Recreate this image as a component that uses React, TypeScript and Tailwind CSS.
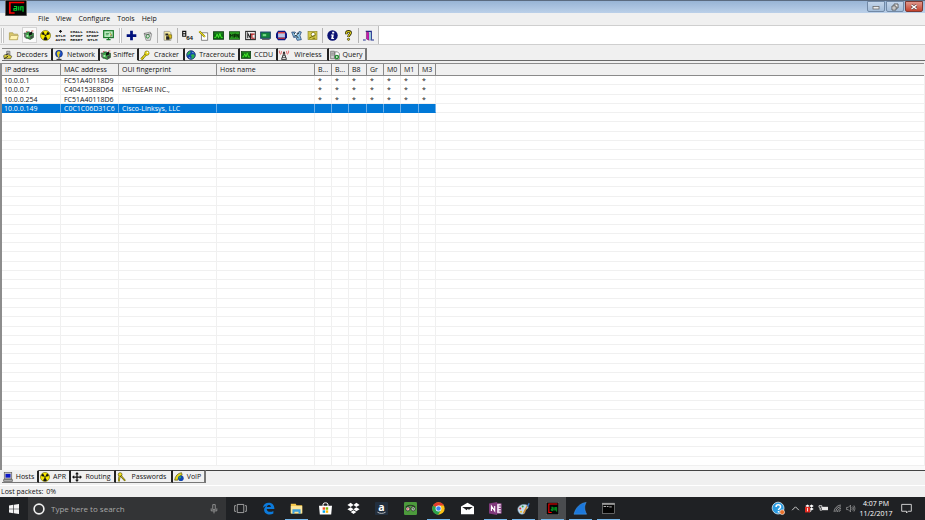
import React from "react";

type Children = { children?: React.ReactNode };

function Icon({
  children,
  className = "size-3",
  stretch = false,
}: Children & { className?: string; stretch?: boolean }) {
  return (
    <svg
      viewBox="0 0 16 16"
      preserveAspectRatio={stretch ? "none" : undefined}
      className={`shrink-0 overflow-visible ${className}`}
      aria-hidden="true"
    >
      {children}
    </svg>
  );
}

/* ---------- shared drawings ---------- */

const CainLogo = () => (
  <>
    <rect width="16" height="16" fill="#7c7c7c" />
    <rect x="0.6" y="0.6" width="14.8" height="14.8" fill="#050505" />
    <path d="M14 2.500H3.500V13H7" fill="none" stroke="#f00" strokeWidth="1.300" />
    <path
      d="M6.500 6.500h2v3.800h-2V8.500h2M10 6.300v4.200M11.500 10.500V6.800h1.600v5"
      fill="none"
      stroke="#00d42c"
      strokeWidth="0.900"
    />
  </>
);

const Radiation = () => (
  <>
    <circle cx="8" cy="8" r="7.3" fill="#f5e800" stroke="#4a4800" strokeWidth="0.8" />
    <path d="M8 8 1.8 6.2A6.4 6.4 0 0 1 4.8 2.4zM8 8l3.2-5.6a6.4 6.4 0 0 1 3 3.8zM8 8l3.3 5.7a6.6 6.6 0 0 1-6.6 0z" fill="#111" />
    <circle cx="8" cy="8" r="1.6" fill="#111" stroke="#f5e800" strokeWidth="0.7" />
  </>
);

const Card = () => (
  <>
    <path d="M0 5h4l1-2h4l2 2h4v7l-5 3-5-2H3z" fill="#3fa148" stroke="#0c2b10" strokeWidth="1" />
    <path d="M0 5v6l3 2V7z" fill="#777" />
    <path d="m8 5 5-3v5L8 9z" fill="#111" />
    <path d="M4 8h3v3H4z" fill="#a8f0b0" />
    <path d="M10 10.500 14 8.500v3.500L10 14z" fill="#444" />
    <path d="M12 1.500h3M3 3l2-1" stroke="#d33" strokeWidth="1.300" />
  </>
);

const Key = () => (
  <>
    <path d="M2 15 9.500 7" stroke="#6b6400" strokeWidth="3.600" />
    <path d="M2 15 9.500 7" stroke="#f2e21d" strokeWidth="2" />
    <path d="m4 12.500 2.500 2" stroke="#8a8200" strokeWidth="1.500" />
    <circle cx="11" cy="5" r="3.500" fill="#f2e21d" stroke="#6b6400" />
    <circle cx="12" cy="4" r="1.200" fill="#fff" />
  </>
);

const Pulse = () => (
  <>
    <rect x="0.500" y="2.500" width="15" height="11" fill="#0b6b12" stroke="#062f08" />
    <path d="M2 11h2l2-5 2 5 2-6 2 6h2" fill="none" stroke="#4dff2f" strokeWidth="1.300" />
    <path d="M2 4.500h12" stroke="#33a02f" />
  </>
);

const Globe = () => (
  <>
    <circle cx="8" cy="8" r="7" fill="#1246b0" stroke="#081b52" />
    <path d="M4 3c3-2 4 0 3 2s-3 1-4 4C1 8 2 5 4 3zM9 7c3-1 5 0 5 2s-3 5-5 5 1-3 0-4-2-2 0-3z" fill="#2fb14a" />
    <path d="m10 3 2 2M5 12l2 1" stroke="#fff" />
  </>
);

const DropboxMark = ({ fill = "#fff" }: { fill?: string }) => (
  <path
    d="M4.500 1 0.500 3.600 4.500 6.200 8 3.600zM11.500 1 15.500 3.600 11.500 6.200 8 3.600zM4.500 6.400.500 9 4.500 11.500 8 9zM11.500 6.400 15.500 9 11.500 11.500 8 9zM4.500 12.300 8 10l3.500 2.300L8 14.800z"
    fill={fill}
  />
);

function TinyText({ lines }: { lines: string[] }) {
  return (
    <>
      {lines.map((line, i) => (
        <text
          key={line}
          x="8"
          y={lines.length === 2 ? 10 + i * 6 : 4 + i * 6}
          textAnchor="middle"
          fontSize="6"
          fontWeight="700"
          fontFamily="Liberation Mono, monospace"
          fill="#111"
        >
          {line}
        </text>
      ))}
    </>
  );
}

/* ---------- toolbar ---------- */

type Tool = { label: string; icon: React.ReactNode; pressed?: boolean };

const toolGroups: { width: string; lead: string; tools: Tool[] }[] = [
  {
    width: "w-[112px] pr-[2px]",
    lead: "grip",
    tools: [
      {
        label: "Open",
        icon: (
          <>
            <path d="M2 4h5l1 2h6v8H2z" fill="#d8c66a" stroke="#a8974a" />
            <path d="M4 8h11l-2 6H2z" fill="#fff3b0" stroke="#b5a55a" />
          </>
        ),
      },
      { label: "Start sniffer", icon: <Card />, pressed: true },
      { label: "Start APR", icon: <Radiation /> },
      {
        label: "NTLM auth",
        icon: (
          <>
            <path d="M8 0v4M6 2h4" stroke="#111" strokeWidth="1.500" />
            <TinyText lines={["NTLM", "AUTH"]} />
          </>
        ),
      },
      { label: "Challenge spoof reset", icon: <TinyText lines={["CHALL", "SPOOF", "RESET"]} /> },
      { label: "Challenge spoof NTLM", icon: <TinyText lines={["CHALL", "SPOOF", "NTLM"]} /> },
      {
        label: "Downgrade",
        icon: (
          <>
            <rect x="1" y="1" width="14" height="10" fill="#bff0c4" stroke="#1a7a2a" strokeWidth="1.800" />
            <path d="M4 5h5M4 7h4" stroke="#1a7a2a" />
            <path d="m10 3 3 5h-2l1 4" fill="#f2e21d" stroke="#555" strokeWidth="0.800" />
            <path d="M8 11v4M5 14h6" stroke="#1a7a2a" strokeWidth="1.800" />
          </>
        ),
      },
    ],
  },
  {
    width: "w-[31px]",
    lead: "grip",
    tools: [
      { label: "Add to list", icon: <path d="M8 1v14M1 8h14" stroke="#00107c" strokeWidth="4" /> },
      {
        label: "Remove",
        icon: (
          <>
            <path d="m3 5 9-2 2 3-2 9H6z" fill="#dcdcdc" stroke="#777" />
            <path d="m6 8 3-2 2 3-2 3-3-1z" fill="none" stroke="#2d8c3a" strokeWidth="1.400" />
            <path d="M3 5c2 2 7 2 10 0" fill="none" stroke="#555" />
          </>
        ),
      },
    ],
  },
  {
    width: "w-[15px]",
    lead: "line",
    tools: [
      {
        label: "Configure",
        icon: (
          <>
            <path d="M3 2h8l2 2v11H3z" fill="#f4e9a0" stroke="#888" />
            <path d="M5 5h4v3H5zM6 9h5v5H6z" fill="#222" />
            <path d="M9 7h5v5h-3z" fill="#e0c21c" stroke="#554c00" strokeWidth="0.800" />
          </>
        ),
      },
    ],
  },
  {
    width: "w-[140px]",
    lead: "line",
    tools: [
      {
        label: "Base64 decoder",
        icon: (
          <>
            <path d="M1 2h4.500v7H1zM1 5.500h4.500" fill="none" stroke="#111" strokeWidth="1.600" />
            <text x="6" y="15" fontSize="9" fontWeight="700" fontFamily="Liberation Sans, sans-serif" fill="#111">
              64
            </text>
          </>
        ),
      },
      {
        label: "Access password",
        icon: (
          <>
            <path d="M5 4h9v11H5z" fill="#fff" stroke="#555" />
            <path d="m2 2 8 8" stroke="#6b6400" strokeWidth="3" />
            <path d="m2 2 8 8" stroke="#f2e21d" strokeWidth="1.500" />
          </>
        ),
      },
      { label: "Cisco type-7 decoder", icon: <Pulse /> },
      {
        label: "Cisco VPN decoder",
        icon: (
          <>
            <rect x="0.500" y="2.500" width="15" height="11" fill="#2a9c22" stroke="#073b08" />
            <path d="M2 11V6l2 3 2-3v5M8 11V6h2v3H8M11.500 11V6l2.500 5V6" fill="none" stroke="#041f04" strokeWidth="1.200" />
          </>
        ),
      },
      {
        label: "VNC decoder",
        icon: (
          <>
            <rect x="1" y="2" width="14" height="12" fill="#eee" stroke="#222" strokeWidth="1.500" />
            <path d="M8 6h4M14 6h-4v6h4" fill="none" stroke="#b51d1d" strokeWidth="1.700" />
            <path d="M4 12V5l4 7V5" fill="none" stroke="#222" strokeWidth="1.500" />
          </>
        ),
      },
      {
        label: "Remote desktop decoder",
        icon: (
          <>
            <rect x="1" y="3" width="14" height="9" fill="#13843b" stroke="#17406b" strokeWidth="1.500" />
            <path d="M4 6h5v3H4z" fill="#77dd88" />
            <path d="M3 13.500h11" stroke="#444" strokeWidth="1.500" />
          </>
        ),
      },
      {
        label: "Syskey decoder",
        icon: (
          <>
            <path d="M3 1h10l3 4v6l-3 4H3l-3-4V5z" fill="#0b1680" />
            <path d="M3 3h10v3H3z" fill="#e24040" />
            <rect x="3" y="5" width="10" height="6" fill="#b6c4e6" />
            <path d="M3 12h10" stroke="#d33" strokeWidth="1.500" />
          </>
        ),
      },
      {
        label: "Hash calculator",
        icon: (
          <>
            <path d="M1 3h5l2 3 4-4 3 1-2 5 2 6-6 1-2-5-3 1z" fill="#8ec6e8" stroke="#113066" />
            <path d="m4 4 7 8M12 4 5 9" stroke="#111" strokeWidth="1.300" />
            <circle cx="7" cy="6" r="1.500" fill="#fff" />
          </>
        ),
      },
      {
        label: "RSA token",
        icon: (
          <>
            <rect x="1.500" y="2" width="13" height="12" fill="#d5c94a" stroke="#8f8729" />
            <circle cx="9" cy="6.500" r="3" fill="#fff" stroke="#6b6400" />
            <path d="m3 12 9-5M8 12h4" stroke="#6b6400" strokeWidth="1.300" />
          </>
        ),
      },
    ],
  },
  {
    width: "w-[31px]",
    lead: "line",
    tools: [
      {
        label: "About",
        icon: (
          <>
            <circle cx="8" cy="8" r="7.600" fill="#0b1272" />
            <path d="M7.500 2.500h3v2.600h-3zM6 6.500h4l-1 5h1.500L10 13H6l1-5H5.500z" fill="#fff" />
          </>
        ),
      },
      {
        label: "Help",
        icon: (
          <>
            <path d="M5 6V4c0-3 6-3 6 0S8 7 8 10" fill="none" stroke="#2b2900" strokeWidth="3.800" />
            <path d="M5 5.600V4c0-2.500 6-2.500 6 0S8 7 8 9.700" fill="none" stroke="#e8d81a" strokeWidth="1.600" />
            <circle cx="8" cy="13.500" r="1.600" fill="#e8d81a" stroke="#2b2900" />
          </>
        ),
      },
    ],
  },
  {
    width: "w-[16px]",
    lead: "line",
    tools: [
      {
        label: "Exit",
        icon: (
          <>
            <path d="M4 2h8v12" fill="none" stroke="#1d2d8c" strokeWidth="1.800" />
            <path d="m5 2 4 2v11l-4-2z" fill="#c41bb0" stroke="#5a0e50" strokeWidth="0.700" />
            <path d="M9 4h2v10H9z" fill="#8ee0e0" />
            <path d="M0 14.500h4M11 14.500h5" stroke="#1d2d8c" strokeWidth="1.500" />
          </>
        ),
      },
    ],
  },
];

function Toolbar() {
  return (
    <div className="flex h-[20px] shrink-0 border-y border-[#cfcfcf] bg-[#f0f0f0]">
      <div role="toolbar" className="flex items-center">
        {toolGroups.map((group, i) => (
          <React.Fragment key={i}>
            {group.lead === "grip" ? (
              <span className="mr-[2px] ml-px h-[15px] w-[3px] border-x border-[#c4c4c4] bg-white" />
            ) : (
              <span className="mx-[2px] h-[15px] w-px bg-[#b4b4b4]" />
            )}
            <div className={`flex justify-between ${group.width}`}>
              {group.tools.map((tool) => (
                <button
                  key={tool.label}
                  type="button"
                  aria-label={tool.label}
                  aria-pressed={tool.pressed}
                  className={`flex h-[16px] w-[15px] items-center justify-center ${
                    tool.pressed ? "border border-[#d4d4d4] bg-[#fafafa]" : ""
                  }`}
                >
                  <Icon className={tool.pressed ? "size-[10px]" : "size-[11px]"}>{tool.icon}</Icon>
                </button>
              ))}
            </div>
          </React.Fragment>
        ))}
      </div>
      <div className="ml-px flex-1 border-l border-[#bdbdbd] bg-white" />
    </div>
  );
}

/* ---------- tabs ---------- */

type Tab = { label: string; width: string; icon: React.ReactNode };

const topTabs: Tab[] = [
  {
    label: "Decoders",
    width: "w-[51px]",
    icon: (
      <>
        <path d="M6 2h5v7H6z" fill="#cfcfcf" stroke="#444" />
        <path d="M1 9c3-3 8-2 13 1l-2 4H2z" fill="#d8cd3a" stroke="#333" />
        <path d="m2 14 6-4M9 5l-4 3" stroke="#222" strokeWidth="1.500" />
      </>
    ),
  },
  {
    label: "Network",
    width: "w-[47px]",
    icon: (
      <>
        <circle cx="8" cy="6" r="5.500" fill="#1e50c8" stroke="#0a1f60" />
        <path d="M7 2c3 0 4 2 2 4s1 3-1 5-2-3-3-4 0-5 2-5z" fill="#e3cf1e" />
        <path d="M8 12v2M4 15h8" stroke="#222" strokeWidth="1.500" />
      </>
    ),
  },
  { label: "Sniffer", width: "w-[39px]", icon: <Card /> },
  { label: "Cracker", width: "w-[46px]", icon: <Key /> },
  { label: "Traceroute", width: "w-[55px]", icon: <Globe /> },
  { label: "CCDU", width: "w-[38px]", icon: <Pulse /> },
  {
    label: "Wireless",
    width: "w-[51px]",
    icon: (
      <>
        <path d="M1 1c-1 2 0 5 2 6M4 2c-1 2 0 3 1 4M15 1c1 2 0 5-2 6M12 2c1 2 0 3-1 4" fill="none" stroke="#e03a3a" strokeWidth="1.300" />
        <path d="M8 4 4 15h8z" fill="none" stroke="#222" strokeWidth="1.400" />
        <path d="M6 9h4M5 12h6" stroke="#222" />
        <circle cx="8" cy="4" r="1.500" fill="#222" />
      </>
    ),
  },
  {
    label: "Query",
    width: "w-[38px]",
    icon: (
      <>
        <path d="M1 2h6v12H1z" fill="#d0d0d0" stroke="#555" />
        <path d="M2 5h4M2 8h4" stroke="#555" />
        <path d="M8 3h4l3 3v9H8z" fill="#fff" stroke="#555" />
        <circle cx="11" cy="11" r="3.600" fill="#1b8a2a" />
        <path d="m10 9 3 2-3 2z" fill="#fff" />
      </>
    ),
  },
];

const bottomTabs: Tab[] = [
  {
    label: "Hosts",
    width: "w-[37px]",
    icon: (
      <>
        <rect x="2" y="1" width="12" height="10" fill="#c8c8c8" stroke="#555" />
        <rect x="4" y="3" width="8" height="6" fill="#0b16c8" />
        <path d="M1 12h14v3H1z" fill="#b5b5b5" stroke="#444" />
      </>
    ),
  },
  { label: "APR", width: "w-[32px]", icon: <Radiation /> },
  {
    label: "Routing",
    width: "w-[45px]",
    icon: (
      <path
        d="M8 0l3 3.500H9V7h3.500V5L16 8l-3.500 3V9H9v3.500h2L8 16l-3-3.500h2V9H3.500v2L0 8l3.500-3v2H7V3.500H5z"
        fill="#111"
      />
    ),
  },
  {
    label: "Passwords",
    width: "w-[57px]",
    icon: (
      <>
        <circle cx="5" cy="4" r="3" fill="#f2e21d" stroke="#4b4600" />
        <path d="m6 6 7 8M4 7l-1 8" stroke="#4b4600" strokeWidth="3" />
        <path d="m6 6 7 8M4 7l-1 8" stroke="#f2e21d" strokeWidth="1.300" />
      </>
    ),
  },
  {
    label: "VoIP",
    width: "w-[33px]",
    icon: (
      <>
        <path d="M1 13C2 6 6 2 12 1l1 4c-4 1-6 4-7 8z" fill="#e3d61e" stroke="#4b4600" />
        <circle cx="11" cy="10" r="4.500" fill="#1246b0" />
        <path d="M9 7c2-1 3 1 2 2s-2 2-3 1 0-2 1-3z" fill="#2fb14a" />
      </>
    ),
  },
];

function Tabs({ tabs, active, side }: { tabs: Tab[]; active: string; side: "top" | "bottom" }) {
  const top = side === "top";
  return (
    <div
      role="tablist"
      className={`flex shrink-0 pl-[2px] ${top ? "mt-[3px] h-[13px]" : "h-[13px] bg-[#f0f0f0]"}`}
    >
      {tabs.map((tab) => {
        const selected = tab.label === active;
        let edge = top ? "border-t-[#8a8a8a] border-b-[#6a6a6a]" : "border-t-[#444] border-b-[#777]";
        if (selected) {
          edge = top ? "border-t-[#8a8a8a] border-b-[#f0f0f0]" : "border-t-[#f0f0f0] border-b-[#777]";
        }
        return (
          <button
            key={tab.label}
            type="button"
            role="tab"
            aria-selected={selected}
            className={`flex items-center border-y border-r-2 border-r-[#222] pl-px last-of-type:border-r-[#777] ${edge} ${tab.width}`}
          >
            <Icon className="size-[10px]">{tab.icon}</Icon>
            <span className="flex-1 text-center">{tab.label}</span>
          </button>
        );
      })}
      <div className={`flex-1 ${top ? "border-b border-[#6a6a6a]" : "border-t border-[#444]"}`} />
    </div>
  );
}

/* ---------- host list ---------- */

const columns = [
  { label: "IP address", width: "w-[59px]" },
  { label: "MAC address", width: "w-[58px]" },
  { label: "OUI fingerprint", width: "w-[98px]" },
  { label: "Host name", width: "w-[98px]" },
  { label: "B...", width: "w-[17px]" },
  { label: "B...", width: "w-[17px]" },
  { label: "B8", width: "w-[18px]" },
  { label: "Gr", width: "w-[17px]" },
  { label: "M0", width: "w-[17px]" },
  { label: "M1", width: "w-[18px]" },
  { label: "M3", width: "w-[17px]" },
];

const hosts = [
  { ip: "10.0.0.1", mac: "FC51A40118D9", oui: "", mark: "*" },
  { ip: "10.0.0.7", mac: "C404153E8D64", oui: "NETGEAR INC.,", mark: "*" },
  { ip: "10.0.0.254", mac: "FC51A40118D6", oui: "", mark: "*" },
  { ip: "10.0.0.149", mac: "C0C1C06D31C6", oui: "Cisco-Linksys, LLC", mark: "" },
];

const ROWS = 42;
const SELECTED = 3;

function HostTable() {
  return (
    <div className="min-h-0 flex-1 border-t border-l-2 border-[#8c8c8c] bg-white">
      <table className="h-full w-full table-fixed border-separate border-spacing-0 text-left">
        <thead>
          <tr className="h-[12px] bg-[#f0f0f0]">
            {columns.map((col, i) => (
              <th
                key={i}
                className={`h-[12px] overflow-hidden border-r border-b border-[#8a8a8a] p-0 pt-px pl-[3px] font-normal whitespace-nowrap ${col.width}`}
              >
                {col.label}
              </th>
            ))}
            <td className="border-b border-[#8a8a8a] p-0" />
          </tr>
        </thead>
        <tbody>
          {Array.from({ length: ROWS }, (_, r) => {
            const host = hosts[r];
            const cells = host
              ? [host.ip, host.mac, host.oui, "", ...Array(7).fill(host.mark)]
              : Array(11).fill("");
            return (
              <tr key={r} aria-selected={r === SELECTED}>
                {cells.map((cell, c) => (
                  <td
                    key={c}
                    className={`border-r border-b p-0 pt-px leading-[7px] whitespace-nowrap ${
                      c === 0 ? "pl-[2px]" : "pl-[3px]"
                    } ${
                      r === SELECTED
                        ? "border-r-[#6db0ea] border-b-[#0078d7] bg-[#0078d7] text-white"
                        : "border-[#f0f0f0]"
                    }`}
                  >
                    {cell || "\u00a0"}
                  </td>
                ))}
                <td className="border-b border-[#f0f0f0] p-0" />
              </tr>
            );
          })}
        </tbody>
      </table>
    </div>
  );
}

/* ---------- taskbar ---------- */

const apps: { label: string; icon: React.ReactNode; open?: boolean; active?: boolean }[] = [
  {
    label: "Task view",
    icon: (
      <path d="M4 3h8v10H4zM2.500 4.500H.8v7h1.700M13.500 4.500h1.700v7h-1.700" fill="none" stroke="#b8b8b8" strokeWidth="1" />
    ),
  },
  {
    label: "Edge",
    icon: (
      <path
        d="M1 7.500C1.600 3 4.500.800 8.300.800c4.600 0 7 3.200 7 7.700H5.800c.200 4 5.200 4.500 8.200 2.500v3.300C9 16.800 2.600 15 2.600 9.500c0-2.300 1.300-4 3.200-5C3.600 5 2 6 1 7.500zm4.900-1.400h5C10.900 3 6.500 2.900 5.900 6.100z"
        fill="#0c7bdc"
      />
    ),
  },
  {
    label: "File Explorer",
    open: true,
    icon: (
      <>
        <path d="M1 2h6l1 2h7v10H1z" fill="#f5c84b" />
        <path d="M1 5h14v9H1z" fill="#fde69a" />
        <path d="M3 9h10v5.500h-2.500V12h-5v2.500H3z" fill="#3ea0dc" />
      </>
    ),
  },
  {
    label: "Store",
    icon: (
      <>
        <path d="M5 5V2.500C5 .5 11 .5 11 2.500V5" fill="none" stroke="#fff" strokeWidth="1.200" />
        <path d="M0 4.500h16L15 15.500H1z" fill="#fff" />
        <path d="M4.500 6.500h3v3h-3z" fill="#f25022" />
        <path d="M8.300 6.500h3v3h-3z" fill="#7fba00" />
        <path d="M4.500 10.300h3v3h-3z" fill="#00a4ef" />
        <path d="M8.300 10.300h3v3h-3z" fill="#ffb900" />
      </>
    ),
  },
  { label: "Dropbox", icon: <DropboxMark /> },
  {
    label: "Amazon",
    icon: (
      <>
        <rect width="16" height="16" rx="1" fill="#222f3e" />
        <text x="8" y="11" textAnchor="middle" fontSize="13" fontWeight="700" fontFamily="Open Sans, sans-serif" fill="#fff">
          a
        </text>
        <path d="M3 12.500c3 2 7 2 10 0" fill="none" stroke="#d8d8d8" strokeWidth="1" />
      </>
    ),
  },
  {
    label: "TripAdvisor",
    icon: (
      <>
        <rect width="16" height="16" rx="1.500" fill="#4c9a3c" />
        <path d="M2 6c4-2.500 8-2.500 12 0" fill="none" stroke="#222" strokeWidth="1.200" />
        <circle cx="4.800" cy="8.500" r="2.500" fill="#fff" stroke="#222" />
        <circle cx="11.200" cy="8.500" r="2.500" fill="#fff" stroke="#222" />
        <circle cx="4.800" cy="8.500" r="1" fill="#d33" />
        <circle cx="11.200" cy="8.500" r="1" fill="#184d10" />
      </>
    ),
  },
  {
    label: "Chrome",
    open: true,
    icon: (
      <>
        <circle cx="8" cy="8" r="7.600" fill="#fbc116" />
        <path d="M8 8 1.400 4.200A7.600 7.600 0 0 1 14.600 4.200H8z" fill="#e33b2e" />
        <path d="M8 8 1.400 4.200A7.600 7.600 0 0 0 7.500 15.600L11 10z" fill="#2ba24c" />
        <circle cx="8" cy="8" r="3.600" fill="#fff" />
        <circle cx="8" cy="8" r="2.800" fill="#4285f4" />
      </>
    ),
  },
  {
    label: "Mail",
    icon: (
      <>
        <path d="M0 5.500 8 1l8 4.500V15H0z" fill="#fff" />
        <path d="M1.500 6h13L10 9.500 8 8.500 7 10z" fill="#1f2022" />
      </>
    ),
  },
  {
    label: "OneNote",
    open: true,
    icon: (
      <>
        <path d="M8 2h7v12H8z" fill="#f2e6f4" stroke="#80397b" />
        <path d="M12 5h3M12 8h3M12 11h3" stroke="#80397b" strokeWidth="1.300" />
        <path d="M0 1.800 10 0v16L0 14.200z" fill="#80397b" />
        <path d="M3 11V5l4 6V5" fill="none" stroke="#fff" strokeWidth="1.400" />
      </>
    ),
  },
  {
    label: "Paint",
    open: true,
    icon: (
      <>
        <path d="M1 9c0-4 4-6 8-6s6 3 4 5-3 1-3 3-1 4-4 4-5-3-5-6z" fill="#c7dcec" stroke="#7aa0bc" strokeWidth="0.700" />
        <circle cx="4" cy="8" r="1.200" fill="#d9352b" />
        <circle cx="7" cy="5.500" r="1.200" fill="#2c9c44" />
        <circle cx="5" cy="12" r="1.200" fill="#e7b81c" />
        <path d="m8 14 5-10" stroke="#d68b2c" strokeWidth="1.700" />
        <path d="m12 5 2.500-4 1.200 1-2 4z" fill="#3c78c8" />
      </>
    ),
  },
  { label: "Cain", open: true, active: true, icon: <CainLogo /> },
  {
    label: "Wireshark",
    open: true,
    icon: (
      <path d="M0 15C2 7 7 1.500 15 .500c-2.500 4-2.500 9 .500 14.500z" fill="#1b78dc" stroke="#4aa0f0" strokeWidth="0.600" />
    ),
  },
  {
    label: "Command Prompt",
    open: true,
    icon: (
      <>
        <rect x="0.500" y="1.500" width="15" height="12.500" fill="#050505" stroke="#8f8f8f" strokeWidth="0.800" />
        <path d="M.500 2.500h15" stroke="#cfcfcf" strokeWidth="1.500" />
        <path d="M2 5.500h3M6 5.500h2M9 6h3" stroke="#ddd" />
      </>
    ),
  },
];

const tray: { label: string; width: string; icon: React.ReactNode }[] = [
  {
    label: "Get help",
    width: "w-[20px]",
    icon: (
      <>
        <circle cx="7.500" cy="7.500" r="7.300" fill="#2b9be0" stroke="#e8f4fc" strokeWidth="0.900" />
        <path d="M5 6c0-3.500 5.500-3.500 5.500 0C10.500 8 8 8 8 9.800M8 11v1.800" fill="none" stroke="#fff" strokeWidth="1.800" />
        <circle cx="12.500" cy="12.500" r="3" fill="#e8702a" stroke="#fff" strokeWidth="0.700" />
      </>
    ),
  },
  {
    label: "Show hidden icons",
    width: "w-[14px]",
    icon: <path d="m2 11 6-6 6 6" fill="none" stroke="#e0e0e0" strokeWidth="1.600" />,
  },
  {
    label: "Dropbox status",
    width: "w-[14px]",
    icon: (
      <>
        <DropboxMark />
        <rect x="0" y="5" width="9" height="10" fill="#e0281e" />
        <path d="M4.500 7v6" stroke="#fff" strokeWidth="1.500" />
      </>
    ),
  },
  {
    label: "Battery",
    width: "w-[14px]",
    icon: (
      <>
        <rect x="5" y="5" width="11" height="6" fill="#e8e8e8" />
        <path d="M0 3h5v3c0 2-3 2-5 0zM2 7v4h3" fill="none" stroke="#e8e8e8" strokeWidth="1.500" />
      </>
    ),
  },
  {
    label: "Wi-Fi",
    width: "w-[14px]",
    icon: (
      <path d="M2 14C2 8 8 2 14 2M5 14c0-5 4-9 9-9M8 14c0-3 3-6 6-6M11 14c0-2 1-3 3-3" fill="none" stroke="#bdbdbd" strokeWidth="1.300" />
    ),
  },
  {
    label: "Volume",
    width: "w-[13px]",
    icon: (
      <path d="M1 6h3l4-4v12l-4-4H1zM10 5.500c1.500 1.500 1.500 3.500 0 5M12 4c2 2.500 2 5.500 0 8M14 2.500c2.500 3.500 2.500 7.500 0 11" fill="none" stroke="#bdbdbd" strokeWidth="1" />
    ),
  },
];

function Taskbar() {
  return (
    <footer className="flex h-[23px] shrink-0 items-stretch bg-[#1f2124] text-white">
      <button type="button" aria-label="Start" className="flex w-[28px] items-center justify-center">
        <Icon className="size-[10px]">
          <path d="M0 2.300 7 1.300v6.200H0zM8 1.100 16 0v7.500H8zM0 8.500h7v6.200l-7-1zM8 8.500h8V16l-8-1.100z" fill="#f4f4f4" />
        </Icon>
      </button>
      <label className="flex w-[198px] items-center bg-[#333436] pl-[5px]">
        <Icon className="size-3">
          <circle cx="8" cy="8" r="6.500" fill="none" stroke="#f0f0f0" strokeWidth="2.200" />
        </Icon>
        <input
          type="text"
          aria-label="Search"
          placeholder="Type here to search"
          className="ml-[6px] min-w-0 flex-1 bg-transparent text-[8px] outline-none placeholder:text-[#a8a8a8]"
        />
        <Icon className="mr-[7px] size-[10px]">
          <path d="M6 1h4v8H6zM3.500 7v4h9V7M8 11v4" fill="none" stroke="#a8a8a8" strokeWidth="1.200" />
        </Icon>
      </label>
      <nav className="flex w-[397px] justify-between">
        {apps.map((app) => (
          <button
            key={app.label}
            type="button"
            aria-label={app.label}
            className={`flex w-[28px] flex-col items-center ${app.active ? "bg-[#4a4c4f]" : ""}`}
          >
            <span className="flex flex-1 items-center">
              <Icon className="size-[13px]">{app.icon}</Icon>
            </span>
            <span className={`h-px w-[23px] ${app.open ? "bg-[#76b9ed]" : ""}`} />
          </button>
        ))}
      </nav>
      <div className="ml-auto flex items-center">
        {tray.map((item) => (
          <button
            key={item.label}
            type="button"
            aria-label={item.label}
            className={`flex items-center justify-center ${item.width}`}
          >
            <Icon className={item.label === "Get help" ? "size-[13px]" : "size-[9px]"}>{item.icon}</Icon>
          </button>
        ))}
        <time className="w-[38px] text-center text-[7px] leading-[10px]">
          4:07 PM
          <br />
          11/2/2017
        </time>
        <button type="button" aria-label="Action center" className="mr-[13px] ml-[6px]">
          <Icon className="size-[11px]">
            <path d="M1 2h14v10h-4.500L8 14.500V12H1z" fill="none" stroke="#e0e0e0" strokeWidth="1.300" />
          </Icon>
        </button>
      </div>
    </footer>
  );
}

/* ---------- window ---------- */

function TitleBar() {
  return (
    <header className="flex h-[13px] shrink-0 items-start justify-end gap-px border-t border-[#5b6b80] bg-linear-to-b from-[#98b4d5] to-[#bbd0e9] pr-[2px]">
      <button
        type="button"
        aria-label="Minimize"
        className="flex h-[11px] w-[18px] items-center justify-center rounded-b-xs border border-[#7189a6] bg-linear-to-b from-[#c3d5ea] to-[#a4bdd9]"
      >
        <Icon className="size-[8px]">
          <rect x="2" y="7" width="12" height="5" fill="#eee" stroke="#666" strokeWidth="1.500" />
        </Icon>
      </button>
      <button
        type="button"
        aria-label="Restore"
        className="flex h-[11px] w-[18px] items-center justify-center rounded-b-xs border border-[#7189a6] bg-linear-to-b from-[#c3d5ea] to-[#a4bdd9]"
      >
        <Icon className="size-[8px]">
          <path d="M6 2h8v8H6z" fill="#eee" stroke="#555" strokeWidth="1.800" />
          <path d="M2 6h8v8H2z" fill="#eee" stroke="#555" strokeWidth="1.800" />
          <path d="M5 9h2v2H5z" fill="#555" />
        </Icon>
      </button>
      <button
        type="button"
        aria-label="Close"
        className="flex h-[11px] w-[18px] items-center justify-center rounded-b-xs border border-[#7d3a33] bg-linear-to-b from-[#e0968b] to-[#c4402c]"
      >
        <Icon className="size-[8px]">
          <path d="m3 4 10 8M13 4 3 12" stroke="#5b3a3a" strokeWidth="5" />
          <path d="m3 4 10 8M13 4 3 12" stroke="#fff" strokeWidth="3" />
        </Icon>
      </button>
    </header>
  );
}

const menus = ["File", "View", "Configure", "Tools", "Help"];

export default function App() {
  return (
    <div className="relative flex h-screen flex-col bg-[#f0f0f0] font-['Open_Sans','Noto_Sans',sans-serif] text-[7px] leading-[10px] text-[#111]">
      <TitleBar />
      <Icon stretch className="absolute top-0 left-[5px] h-[16px] w-[22px]">
        <CainLogo />
      </Icon>
      <nav className="flex h-[12px] shrink-0 items-center gap-[7px] pl-[38px]">
        {menus.map((menu) => (
          <button key={menu} type="button">
            {menu}
          </button>
        ))}
      </nav>
      <Toolbar />
      <Tabs tabs={topTabs} active="Sniffer" side="top" />
      <main className="flex min-h-0 flex-1 flex-col pt-[2px] pr-px">
        <HostTable />
      </main>
      <div className="h-[4px] shrink-0 border-l-2 border-[#8c8c8c] bg-[#fafafa]" />
      <Tabs tabs={bottomTabs} active="Hosts" side="bottom" />
      <div className="mt-[2px] flex h-[12px] shrink-0 items-center gap-[3px] border-t border-white pt-px pl-px">
        <span>Lost packets:</span>
        <span>0%</span>
      </div>
      <Taskbar />
    </div>
  );
}
